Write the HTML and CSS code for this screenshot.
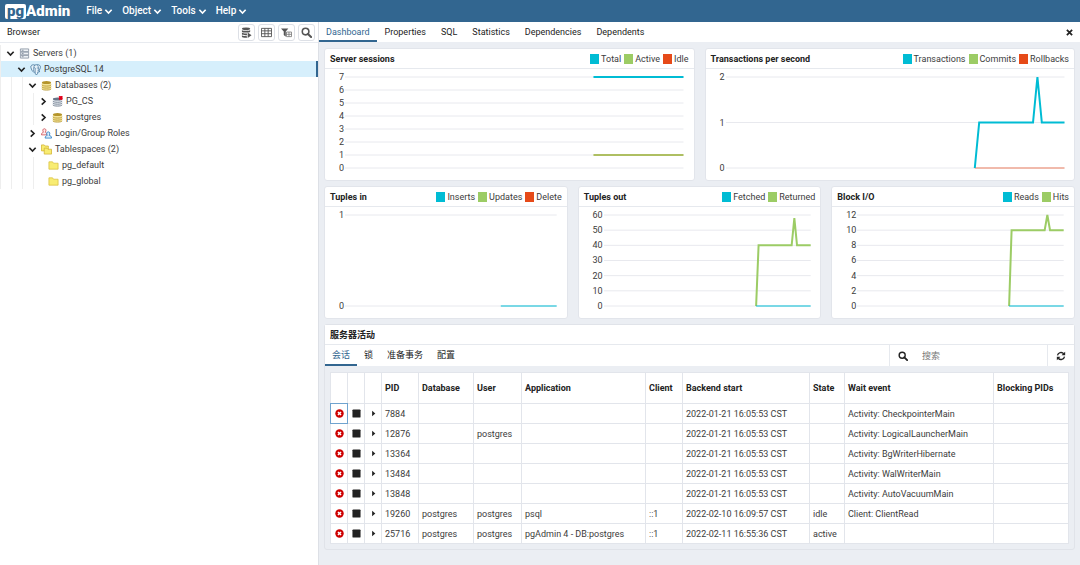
FILE: index.html
```html
<!DOCTYPE html>
<html lang="zh-CN">
<head>
    <meta charset="UTF-8">
    <meta name="viewport" content="width=device-width, initial-scale=1.0">
    <title>pgAdmin 4</title>
    <link rel="stylesheet" href="styles.css">
</head>
<body>

    <!-- Shared icons -->
    <svg class="sprite" aria-hidden="true">
        <symbol id="down" viewBox="0 0 10 10"><path d="M1.500 3 5 6.700 8.500 3" fill="none" stroke="currentColor" stroke-width="1.800"/></symbol>
        <symbol id="right" viewBox="0 0 10 10"><path d="M3 1.500 6.700 5 3 8.500" fill="none" stroke="currentColor" stroke-width="1.800"/></symbol>
        <symbol id="search" viewBox="0 0 12 12"><circle cx="5" cy="5" r="3.600" fill="none" stroke="currentColor" stroke-width="1.700"/><path d="M7.600 7.600 11 11" stroke="currentColor" stroke-width="2.200" stroke-linecap="round"/></symbol>
        <symbol id="db" viewBox="0 0 12 12"><path d="M1 2.700v6.800c0 2 10 2 10 0V2.700z" fill="#f3e39a"/><ellipse cx="6" cy="2.700" rx="5" ry="1.700" fill="#b4942b"/><path d="M1 5.200c0 1.900 10 1.900 10 0M1 7.400c0 1.900 10 1.900 10 0M1 9.600c0 1.900 10 1.900 10 0" fill="none" stroke="#b4942b" stroke-width=".9"/></symbol>
        <symbol id="folder" viewBox="0 0 12 12"><path d="M1 2h4l1 1.500h5V10H1z" fill="#f8ec72" stroke="#d9be3c" stroke-width=".8"/></symbol>
        <symbol id="kill" viewBox="0 0 10 10"><circle cx="5" cy="5" r="4.700" fill="#cc0000"/><path d="M3.300 3.300 6.700 6.700M6.700 3.300 3.300 6.700" stroke="#fff" stroke-width="1.600"/></symbol>
        <symbol id="stop" viewBox="0 0 10 10"><rect x=".5" y=".5" width="9" height="9" rx="1" fill="#222"/></symbol>
        <symbol id="caret" viewBox="0 0 10 10"><path d="M3.500 2 7 5 3.500 8z" fill="#222"/></symbol>
    </svg>

    <header class="topbar">
        <a class="logo" href="#" aria-label="pgAdmin"><span class="logo-pg">pg</span>Admin</a>
        <nav class="menu">
            <button>File <svg class="chev"><use href="#down"/></svg></button>
            <button>Object <svg class="chev"><use href="#down"/></svg></button>
            <button>Tools <svg class="chev"><use href="#down"/></svg></button>
            <button>Help <svg class="chev"><use href="#down"/></svg></button>
        </nav>
    </header>

    <div class="layout">
        <aside class="browser">
            <div class="browser-head">
                <span>Browser</span>
                <div class="tools">
                    <button aria-label="Query Tool"><svg viewBox="0 0 12 12"><g fill="#555"><ellipse cx="5.500" cy="2" rx="4.500" ry="1.500"/><path d="M1 3.300c1 1.300 8 1.300 9 0v1.800c-1 1.300-8 1.300-9 0zM1 6c1 1.300 5 1.300 5.500 1v2H5C3 9 1.500 8.600 1 8zM1 9c1 .8 3 1 5.500 1v1.800C4 12 1 11.500 1 10.600z"/><path d="M7.300 6 11.500 9l-4.200 3z"/></g></svg></button>
                    <button aria-label="View Data"><svg viewBox="0 0 12 12"><path d="M.5 1.500h11v9H.5zM.5 4.200h11M.5 7.300h11M4.200 1.500v9M7.800 1.500v9" fill="none" stroke="#555"/></svg></button>
                    <button aria-label="Filtered Rows"><svg viewBox="0 0 12 12"><path d="M0 1.500h8L5.200 4.800v5.700L3 8.800v-4z" fill="#555"/><path d="M6 5.500h5.500v5H6zM6 8h5.500M8.700 5.500v5" fill="#fff" stroke="#777" stroke-width=".9"/></svg></button>
                    <button aria-label="Search Objects"><svg><use href="#search"/></svg></button>
                </div>
            </div>
            <ul class="tree">
                <li class="node"><svg class="chev"><use href="#down"/></svg>
                    <svg class="icon" viewBox="0 0 12 12"><path d="M1.500 1h9v3h-9zM1.500 4.500h9v3h-9zM1.500 8h9v3h-9z" fill="#eef1f5" stroke="#8792a2" stroke-width=".9"/><path d="M3 2.500h2M3 6h2M3 9.500h2" stroke="#8792a2"/></svg>Servers (1)</li>
                <li class="node selected"><i></i><svg class="chev"><use href="#down"/></svg>
                    <svg class="icon" viewBox="0 0 12 12"><path d="M1 2.200C2 .6 4 .7 5.200 1.200 7 .4 10.800.5 11.300 2.500c.3 1.800-.9 4-1.800 5.200l1.300.3c-.8.800-1.700.8-2.300.6-.2 1.300-.1 3-1.500 3-1.400 0-1.300-1.600-1.400-3.200-.8.8-1.700.8-2.300-.1C2 7.200.5 3.900 1 2.200z" fill="#e7f2fa" stroke="#336791" stroke-width=".8"/><path d="M5.200 1.200C3.800 2.600 4.100 5.500 3.900 7.800M8 1.400c1.800 1.800 1.400 4 .7 6.200M4.200 4.200c1.500-.6 2 .6 1.400 2.200v2M8 3.800v1.200" fill="none" stroke="#336791" stroke-width=".7"/></svg>PostgreSQL 14</li>
                <li class="node"><i></i><i></i><svg class="chev"><use href="#down"/></svg><svg class="icon"><use href="#db"/></svg>Databases (2)</li>
                <li class="node"><i></i><i></i><i></i><svg class="chev"><use href="#right"/></svg>
                    <svg class="icon" viewBox="0 0 12 12"><path d="M1 3.200v6.300c0 2 10 2 10 0V3.200z" fill="#e8ecf1"/><ellipse cx="6" cy="3.200" rx="5" ry="1.700" fill="#667487"/><path d="M1 5.400c0 1.900 10 1.900 10 0M1 7.500c0 1.900 10 1.900 10 0M1 9.600c0 1.900 10 1.900 10 0" fill="none" stroke="#667487" stroke-width=".9"/><path d="m7.800.3 3.500 3.500M11.300.3 7.800 3.800" stroke="#e2001a" stroke-width="2"/></svg>PG_CS</li>
                <li class="node"><i></i><i></i><i></i><svg class="chev"><use href="#right"/></svg><svg class="icon"><use href="#db"/></svg>postgres</li>
                <li class="node"><i></i><i></i><svg class="chev"><use href="#right"/></svg>
                    <svg class="icon" viewBox="0 0 12 12"><g stroke-width=".9"><path d="M.5 7.500c0-2 1-2.500 2.200-2.900C1.300 2.800 2 .8 3.700.8s2.400 2 1 3.800c1 .3 1.600 1 1.800 2.900z" fill="#fdeaea" stroke="#d0545b"/><path d="M4.500 11c0-2 1.200-2.600 2.400-3-1.300-1.900-.7-3.800 1-3.800s2.400 1.900 1 3.800c1.500.4 2.600 1 2.600 3z" fill="#d8ecfb" stroke="#2b80c5"/></g></svg>Login/Group Roles</li>
                <li class="node"><i></i><i></i><svg class="chev"><use href="#down"/></svg>
                    <svg class="icon" viewBox="0 0 12 12"><g fill="#f8ec72" stroke="#d0b02d" stroke-width=".8"><path d="M.5 1h3l1 1.200H8v5.300H.5z"/><path d="M3.500 4.500h3l1 1.200h4V11h-8z"/></g></svg>Tablespaces (2)</li>
                <li class="node leaf"><i></i><i></i><i></i><svg class="icon"><use href="#folder"/></svg>pg_default</li>
                <li class="node leaf"><i></i><i></i><i></i><svg class="icon"><use href="#folder"/></svg>pg_global</li>
            </ul>
        </aside>

        <main class="main">
            <nav class="tabs">
                <a class="active" href="#">Dashboard</a>
                <a href="#">Properties</a>
                <a href="#">SQL</a>
                <a href="#">Statistics</a>
                <a href="#">Dependencies</a>
                <a href="#">Dependents</a>
                <button class="close" aria-label="Close"><svg viewBox="0 0 8 8"><path d="m1 1 6 6M7 1 1 7" stroke="#222" stroke-width="2"/></svg></button>
            </nav>

            <div class="dashboard">
                <div class="row">
                    <section class="card">
                        <div class="card-head"><h2>Server sessions</h2>
                            <div class="legend"><span class="total">Total</span><span class="active">Active</span><span class="idle">Idle</span></div>
                        </div>
                        <div class="chart">
                            <div class="axis"><span>7</span><span>6</span><span>5</span><span>4</span><span>3</span><span>2</span><span>1</span><span>0</span></div>
                            <svg class="plot" viewBox="0 0 1000 91" preserveAspectRatio="none">
                                <path class="grid" d="M0 0H1000M0 13H1000M0 26H1000M0 39H1000M0 52H1000M0 65H1000M0 78H1000M0 91H1000"/>
                                <path class="blue" d="M734 0H1000"/>
                                <path class="olive" d="M734 78H1000"/>
                            </svg>
                        </div>
                    </section>
                    <section class="card">
                        <div class="card-head"><h2>Transactions per second</h2>
                            <div class="legend"><span class="total">Transactions</span><span class="active">Commits</span><span class="idle">Rollbacks</span></div>
                        </div>
                        <div class="chart">
                            <div class="axis"><span>2</span><span>1</span><span>0</span></div>
                            <svg class="plot" viewBox="0 0 1000 90" preserveAspectRatio="none">
                                <path class="grid" d="M0 0H1000M0 45H1000M0 90H1000"/>
                                <path class="red" d="M735 90H1000"/>
                                <path class="blue" d="M735 90 748 45H907L920 0 933 45H1000"/>
                            </svg>
                        </div>
                    </section>
                </div>

                <div class="row">
                    <section class="card">
                        <div class="card-head"><h2>Tuples in</h2>
                            <div class="legend"><span class="total">Inserts</span><span class="active">Updates</span><span class="idle">Delete</span></div>
                        </div>
                        <div class="chart">
                            <div class="axis"><span>1</span><span>0</span></div>
                            <svg class="plot" viewBox="0 0 1000 90" preserveAspectRatio="none">
                                <path class="grid" d="M0 0H1000M0 90H1000"/>
                                <path class="blue thin" d="M736 90H1000"/>
                            </svg>
                        </div>
                    </section>
                    <section class="card">
                        <div class="card-head"><h2>Tuples out</h2>
                            <div class="legend"><span class="total">Fetched</span><span class="active">Returned</span></div>
                        </div>
                        <div class="chart">
                            <div class="axis wide"><span>60</span><span>50</span><span>40</span><span>30</span><span>20</span><span>10</span><span>0</span></div>
                            <svg class="plot" viewBox="0 0 1000 90" preserveAspectRatio="none">
                                <path class="grid" d="M0 0H1000M0 15H1000M0 30H1000M0 45H1000M0 60H1000M0 75H1000M0 90H1000"/>
                                <path class="green" d="M736 90 748 30H908L921 3 934 30H1000"/>
                                <path class="blue thin" d="M736 90H1000"/>
                            </svg>
                        </div>
                    </section>
                    <section class="card">
                        <div class="card-head"><h2>Block I/O</h2>
                            <div class="legend"><span class="total">Reads</span><span class="active">Hits</span></div>
                        </div>
                        <div class="chart">
                            <div class="axis wide"><span>12</span><span>10</span><span>8</span><span>6</span><span>4</span><span>2</span><span>0</span></div>
                            <svg class="plot" viewBox="0 0 1000 90" preserveAspectRatio="none">
                                <path class="grid" d="M0 0H1000M0 15H1000M0 30H1000M0 45H1000M0 60H1000M0 75H1000M0 90H1000"/>
                                <path class="green" d="M736 90 748 15H908L921 0 934 15H1000"/>
                                <path class="blue thin" d="M736 90H1000"/>
                            </svg>
                        </div>
                    </section>
                </div>

                <section class="activity">
                    <div class="card-head"><h2>服务器活动</h2></div>
                    <div class="activity-nav">
                        <a class="active" href="#">会话</a>
                        <a href="#">锁</a>
                        <a href="#">准备事务</a>
                        <a href="#">配置</a>
                        <label class="search"><svg><use href="#search"/></svg><input type="text" placeholder="搜索" aria-label="搜索"></label>
                        <button class="refresh" aria-label="Refresh"><svg viewBox="0 0 12 12"><path d="M1.800 5.300A4.300 4.300 0 0 1 9.300 3.300M10.200 6.700A4.300 4.300 0 0 1 2.700 8.700" fill="none" stroke="#222" stroke-width="1.600"/><path d="M11 .8v4.400H6.600zM1 11.200V6.800h4.400z" fill="#222"/></svg></button>
                    </div>
                    <div class="table-wrap">
                        <table>
                            <colgroup>
                                <col class="c-icon"><col class="c-icon"><col class="c-icon"><col class="c-pid"><col class="c-db"><col class="c-user"><col class="c-app"><col class="c-client"><col class="c-start"><col class="c-state"><col class="c-wait"><col>
                            </colgroup>
                            <thead>
                                <tr><th></th><th></th><th></th><th>PID</th><th>Database</th><th>User</th><th>Application</th><th>Client</th><th>Backend start</th><th>State</th><th>Wait event</th><th>Blocking PIDs</th></tr>
                            </thead>
                            <tbody>
                                <tr>
                                    <td><button class="focused" aria-label="Terminate"><svg><use href="#kill"/></svg></button></td>
                                    <td><button aria-label="Cancel"><svg><use href="#stop"/></svg></button></td>
                                    <td><button aria-label="Details"><svg><use href="#caret"/></svg></button></td>
                                    <td>7884</td><td></td><td></td><td></td><td></td><td>2022-01-21 16:05:53 CST</td><td></td><td>Activity: CheckpointerMain</td><td></td>
                                </tr>
                                <tr>
                                    <td><button aria-label="Terminate"><svg><use href="#kill"/></svg></button></td>
                                    <td><button aria-label="Cancel"><svg><use href="#stop"/></svg></button></td>
                                    <td><button aria-label="Details"><svg><use href="#caret"/></svg></button></td>
                                    <td>12876</td><td></td><td>postgres</td><td></td><td></td><td>2022-01-21 16:05:53 CST</td><td></td><td>Activity: LogicalLauncherMain</td><td></td>
                                </tr>
                                <tr>
                                    <td><button aria-label="Terminate"><svg><use href="#kill"/></svg></button></td>
                                    <td><button aria-label="Cancel"><svg><use href="#stop"/></svg></button></td>
                                    <td><button aria-label="Details"><svg><use href="#caret"/></svg></button></td>
                                    <td>13364</td><td></td><td></td><td></td><td></td><td>2022-01-21 16:05:53 CST</td><td></td><td>Activity: BgWriterHibernate</td><td></td>
                                </tr>
                                <tr>
                                    <td><button aria-label="Terminate"><svg><use href="#kill"/></svg></button></td>
                                    <td><button aria-label="Cancel"><svg><use href="#stop"/></svg></button></td>
                                    <td><button aria-label="Details"><svg><use href="#caret"/></svg></button></td>
                                    <td>13484</td><td></td><td></td><td></td><td></td><td>2022-01-21 16:05:53 CST</td><td></td><td>Activity: WalWriterMain</td><td></td>
                                </tr>
                                <tr>
                                    <td><button aria-label="Terminate"><svg><use href="#kill"/></svg></button></td>
                                    <td><button aria-label="Cancel"><svg><use href="#stop"/></svg></button></td>
                                    <td><button aria-label="Details"><svg><use href="#caret"/></svg></button></td>
                                    <td>13848</td><td></td><td></td><td></td><td></td><td>2022-01-21 16:05:53 CST</td><td></td><td>Activity: AutoVacuumMain</td><td></td>
                                </tr>
                                <tr>
                                    <td><button aria-label="Terminate"><svg><use href="#kill"/></svg></button></td>
                                    <td><button aria-label="Cancel"><svg><use href="#stop"/></svg></button></td>
                                    <td><button aria-label="Details"><svg><use href="#caret"/></svg></button></td>
                                    <td>19260</td><td>postgres</td><td>postgres</td><td>psql</td><td>::1</td><td>2022-02-10 16:09:57 CST</td><td>idle</td><td>Client: ClientRead</td><td></td>
                                </tr>
                                <tr>
                                    <td><button aria-label="Terminate"><svg><use href="#kill"/></svg></button></td>
                                    <td><button aria-label="Cancel"><svg><use href="#stop"/></svg></button></td>
                                    <td><button aria-label="Details"><svg><use href="#caret"/></svg></button></td>
                                    <td>25716</td><td>postgres</td><td>postgres</td><td>pgAdmin 4 - DB:postgres</td><td>::1</td><td>2022-02-11 16:55:36 CST</td><td>active</td><td></td><td></td>
                                </tr>
                            </tbody>
                        </table>
                    </div>
                </section>
            </div>
        </main>
    </div>
</body>
</html>
```
FILE: styles.css
```css
* {
    box-sizing: border-box;
}
body {
    margin: 0;
    min-height: 100vh;
    display: flex;
    flex-direction: column;
    font-family: Roboto, "Noto Sans CJK SC", sans-serif;
    font-size: 9px;
    line-height: 12px;
    color: #3c3c3c;
    background-color: #fff;
}
button {
    font: inherit;
    color: inherit;
    background: none;
    border: 0;
    padding: 0;
}
a {
    color: inherit;
    text-decoration: none;
}
svg {
    display: block;
    flex: none;
}
h2 {
    margin: 0;
    font-size: 9px;
    font-weight: 700;
    color: #222;
}
.sprite {
    position: absolute;
    width: 0;
    height: 0;
}
.chev {
    width: 9px;
    height: 9px;
}

/* Top bar */
.topbar {
    display: flex;
    align-items: center;
    height: 22px;
    padding-left: 5px;
    background-color: #326690;
    color: #fff;
}
.logo {
    display: flex;
    align-items: center;
    font-size: 15px;
    font-weight: 900;
    line-height: 15px;
}
.logo-pg {
    padding: 0 2px;
    border-radius: 2px;
    background-color: #fff;
    color: #326690;
}
.menu {
    display: flex;
    gap: 9px;
    margin-left: 16px;
    font-size: 10px;
    font-weight: 500;
}
.menu button {
    display: flex;
    align-items: center;
    gap: 2px;
}

.layout {
    flex: 1;
    display: flex;
}

/* Browser tree */
.browser {
    flex: 0 0 318px;
}
.browser-head {
    display: flex;
    align-items: center;
    justify-content: space-between;
    height: 21px;
    padding: 0 3px 0 7px;
    border-bottom: 1px solid #e8ebf0;
    color: #222;
}
.tools {
    display: flex;
    gap: 3px;
}
.tools button {
    display: flex;
    align-items: center;
    justify-content: center;
    width: 17px;
    height: 17px;
    border: 1px solid #dde0e6;
    border-radius: 3px;
    color: #555;
}
.tools svg {
    width: 11px;
    height: 11px;
}
.tree {
    list-style: none;
    margin: 0;
    padding: 2px 0 0;
}
.node {
    display: flex;
    align-items: center;
    height: 16px;
    border-left: 1px solid #eee;
}
.node i {
    align-self: stretch;
    width: 11px;
    border-right: 1px solid #eee;
}
.node .chev {
    margin-left: 5px;
    color: #222;
}
.node .icon {
    width: 11px;
    height: 11px;
    margin: 0 3px 0 4px;
}
.leaf .icon {
    margin-left: 14px;
}
.selected {
    background-color: #d6effc;
    border-right: 2px solid #326690;
}
.selected i {
    border-color: #d6effc;
}

/* Tabs */
.main {
    flex: 1;
    min-width: 0;
    background-color: #ebeef3;
    border-left: 1px solid #dde0e6;
}
.tabs {
    display: flex;
    gap: 1px;
    height: 20px;
    background-color: #fff;
    color: #222;
}
.tabs a {
    padding: 4px 7px 0;
}
.tabs .active,
.activity-nav .active {
    color: #326690;
    border-bottom: 2px solid #326690;
}
.close {
    margin-left: auto;
    padding: 0 7px;
}
.close svg {
    width: 7px;
    height: 7px;
}

/* Dashboard */
.dashboard {
    display: flex;
    flex-direction: column;
    gap: 5px;
    padding: 6px 5px;
}
.row {
    display: flex;
    gap: 10px;
}
.card {
    flex: 1;
    min-width: 0;
    background-color: #fff;
    border: 1px solid #e2e5eb;
    border-radius: 3px;
}
.card-head {
    display: flex;
    align-items: center;
    justify-content: space-between;
    height: 20px;
    padding: 0 5px;
    border-bottom: 1px solid #e6e9ee;
}
.legend {
    display: flex;
    gap: 3px;
}
.legend span {
    display: flex;
    align-items: center;
    gap: 2px;
}
.legend span::before {
    content: "";
    width: 9px;
    height: 10px;
}
.total::before {
    background-color: #00bcd4;
}
.legend .active::before {
    background-color: #9ccc65;
}
.idle::before {
    background-color: #e64a19;
}
.chart {
    display: flex;
    gap: 1px;
    padding: 2px 10px 6px 0;
}
.axis {
    display: flex;
    flex-direction: column;
    justify-content: space-between;
    width: 19px;
    height: 103px;
    text-align: right;
}
.axis.wide {
    width: 24px;
}
.plot {
    flex: 1 1 0;
    width: 0;
    min-width: 0;
    height: 91px;
    margin-top: 6px;
    overflow: visible;
}
.plot path {
    fill: none;
    stroke-width: 2px;
    vector-effect: non-scaling-stroke;
}
.plot .grid {
    stroke: #e8e9ee;
    stroke-width: 1px;
}
.plot .blue {
    stroke: #00bcd4;
}
.plot .green {
    stroke: #9ccc65;
}
.plot .olive {
    stroke: #aebf62;
}
.plot .red {
    stroke: #ee8060;
    stroke-width: 1px;
}
.plot .thin {
    stroke-width: 1px;
}

/* Server activity */
.activity {
    border: 1px solid #e0e3e9;
    border-radius: 3px;
}
.activity .card-head {
    background-color: #fff;
}
.activity-nav {
    display: flex;
    height: 21px;
    background-color: #fff;
    color: #222;
}
.activity-nav a {
    padding: 4px 7px 0;
}
.search {
    display: flex;
    align-items: center;
    gap: 14px;
    width: 159px;
    margin-left: auto;
    padding-left: 8px;
    border: 1px solid #e6e9ee;
    border-width: 0 1px;
}
.search svg,
.refresh svg {
    width: 10px;
    height: 10px;
}
.search input {
    width: 100px;
    padding: 0;
    border: 0;
    outline: 0;
    background: none;
    font: inherit;
}
.search input::placeholder {
    color: #777;
}
.refresh {
    display: flex;
    align-items: center;
    justify-content: center;
    width: 26px;
}
.table-wrap {
    margin: 6px 5px 5px;
    background-color: #fff;
    border-radius: 3px;
}
table {
    width: 100%;
    table-layout: fixed;
    border-collapse: collapse;
}
th, td {
    height: 20px;
    padding: 0 3px;
    border: 1px solid #e2e5eb;
    text-align: left;
    white-space: nowrap;
}
th {
    height: 31px;
    color: #222;
}
td:nth-child(-n+3) {
    padding: 0;
}
td button {
    display: flex;
    align-items: center;
    justify-content: center;
    width: 100%;
    height: 19px;
}
td svg {
    width: 9px;
    height: 9px;
}
.focused {
    outline: 1px solid #6fa3cf;
}
.c-icon {
    width: 17px;
}
.c-pid {
    width: 37px;
}
.c-db {
    width: 55px;
}
.c-user {
    width: 48px;
}
.c-app {
    width: 124px;
}
.c-client {
    width: 37px;
}
.c-start {
    width: 127px;
}
.c-state {
    width: 35px;
}
.c-wait {
    width: 149px;
}
```
